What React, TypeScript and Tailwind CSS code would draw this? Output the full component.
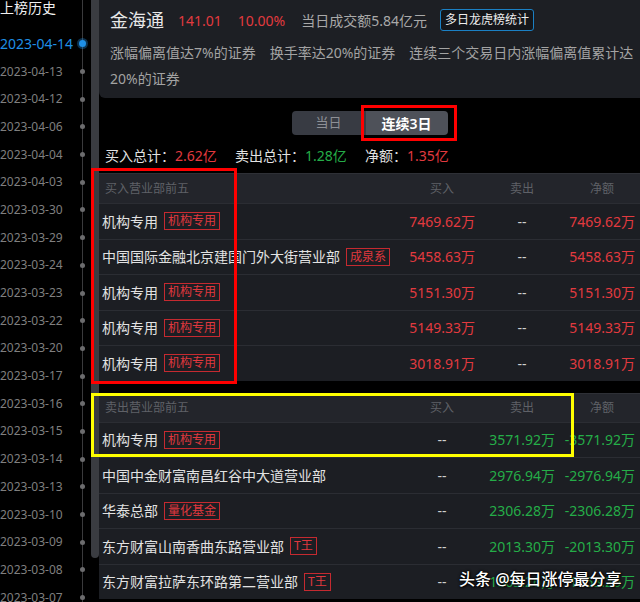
import React from "react";

const dates = [
  "2023-04-14",
  "2023-04-13",
  "2023-04-12",
  "2023-04-06",
  "2023-04-04",
  "2023-04-03",
  "2023-03-30",
  "2023-03-29",
  "2023-03-24",
  "2023-03-23",
  "2023-03-22",
  "2023-03-20",
  "2023-03-17",
  "2023-03-16",
  "2023-03-15",
  "2023-03-14",
  "2023-03-13",
  "2023-03-10",
  "2023-03-09",
  "2023-03-08",
  "2023-03-07",
];

type Row = { name: string; tag?: string; buy: string; sell: string; net: string };

const buyRows: Row[] = [
  { name: "机构专用", tag: "机构专用", buy: "7469.62万", sell: "--", net: "7469.62万" },
  { name: "中国国际金融北京建国门外大街营业部", tag: "成泉系", buy: "5458.63万", sell: "--", net: "5458.63万" },
  { name: "机构专用", tag: "机构专用", buy: "5151.30万", sell: "--", net: "5151.30万" },
  { name: "机构专用", tag: "机构专用", buy: "5149.33万", sell: "--", net: "5149.33万" },
  { name: "机构专用", tag: "机构专用", buy: "3018.91万", sell: "--", net: "3018.91万" },
];

const sellRows: Row[] = [
  { name: "机构专用", tag: "机构专用", buy: "--", sell: "3571.92万", net: "-3571.92万" },
  { name: "中国中金财富南昌红谷中大道营业部", buy: "--", sell: "2976.94万", net: "-2976.94万" },
  { name: "华泰总部", tag: "量化基金", buy: "--", sell: "2306.28万", net: "-2306.28万" },
  { name: "东方财富山南香曲东路营业部", tag: "T王", buy: "--", sell: "2013.30万", net: "-2013.30万" },
  { name: "东方财富拉萨东环路第二营业部", tag: "T王", buy: "--", sell: "1863.26万", net: "-1863.26万" },
];

function Tag({ text }: { text: string }) {
  return (
    <span className="flex h-[18px] items-center border border-[#c52a30] px-[3px] text-[12px] leading-none text-[#e0383e]">
      {text}
    </span>
  );
}

function Value({ v, color }: { v: string; color: string }) {
  if (v === "--") {
    return <div className="w-[80px] pl-[4px] text-center text-[#cfcfcf]">--</div>;
  }
  return <div className={`w-[80px] pr-[5px] text-right ${color}`}>{v}</div>;
}

function Table({ title, rows, headH }: { title: string; rows: Row[]; headH: string }) {
  return (
    <div className="flex flex-col">
      <div className={`flex items-center border-t border-[#2e3036] bg-[#23252b] text-[12px] text-[#5f6167] ${headH}`}>
        <div className="flex-1 pl-[6px]">{title}</div>
        <div className="w-[80px] pl-[4px] text-center">买入</div>
        <div className="w-[80px] pl-[4px] text-center">卖出</div>
        <div className="w-[80px] pl-[4px] text-center">净额</div>
      </div>
      {rows.map((r, i) => (
        <div
          key={i}
          className="flex h-[35.5px] items-center border-t border-[#2b2d33] bg-[#1c1e23] text-[14px]"
        >
          <div className="flex min-w-0 flex-1 items-center gap-[6px] pl-[3px] text-[#e2e2e2]">
            <span className="whitespace-nowrap">{r.name}</span>
            {r.tag && <Tag text={r.tag} />}
          </div>
          <Value v={r.buy} color="text-[#e23a3f]" />
          <Value v={r.sell} color="text-[#25ad48]" />
          <Value v={r.net} color={r.net.startsWith("-") ? "text-[#25ad48]" : "text-[#e23a3f]"} />
        </div>
      ))}
    </div>
  );
}

export default function App() {
  return (
    <div className="relative flex h-[602px] w-[640px] overflow-hidden bg-black font-['Noto_Sans','Noto_Sans_CJK_SC',sans-serif]">
      {/* timeline */}
      <div className="w-[91px] flex-none bg-[linear-gradient(#3a3a3c,#3a3a3c)] bg-[length:1px_100%] bg-[position:82px_0] bg-no-repeat">
        <div className="h-[30px] text-[14px] leading-[16px] text-[#f0f0f0]">上榜历史</div>
        {dates.map((d, i) => (
          <div key={d} className="flex h-[27.7px] items-center">
            <div
              className={
                i === 0
                  ? "w-[80px] text-[14px] text-[#1f8fe6]"
                  : "w-[80px] text-[12px] text-[#7f7f7f]"
              }
            >
              {d}
            </div>
            <div className="flex w-[5px] justify-center">
              {i === 0 ? (
                <span className="h-[7px] w-[7px] flex-none rounded-full bg-[#1f8fe6] shadow-[0_0_0_2px_rgba(31,143,230,0.35)]" />
              ) : (
                <span className="h-[5px] w-[5px] flex-none rounded-full bg-[#6c6c6e]" />
              )}
            </div>
          </div>
        ))}
      </div>

      {/* scrollbar */}
      <div className="h-[558px] w-[8px] flex-none rounded-b-[4px] bg-[#3a3c41]" />

      {/* main */}
      <div className="flex min-w-0 flex-1 flex-col">
        <div className="h-[98px] rounded-bl-[6px] bg-[#1d1f24] pl-[11px] pr-[5px] pt-[9px]">
          <div className="flex h-[22px] items-center">
            <span className="text-[18px] text-[#e8e8e8]">金海通</span>
            <span className="ml-[14px] text-[14px] text-[#e23a3f]">141.01</span>
            <span className="ml-[16px] text-[14px] text-[#e23a3f]">10.00%</span>
            <span className="ml-[16px] text-[14px] text-[#a9a9a9]">当日成交额5.84亿元</span>
            <span className="ml-[13px] flex h-[22px] items-center rounded-[3px] border-[1.5px] border-[#1b80c4] bg-[#14161a] px-[4px] text-[12px] text-[#eeeeee]">
              多日龙虎榜统计
            </span>
          </div>
          <div className="mt-[9px] text-[14px] leading-[26px] text-[#a3a3a3]">
            <span className="mr-[14px]">涨幅偏离值达7%的证券</span>
            <span className="mr-[14px]">换手率达20%的证券</span>
            <span>连续三个交易日内涨幅偏离值累计达20%的证券</span>
          </div>
        </div>

        <div className="mt-[13px] flex justify-center">
          <div className="flex h-[24px] overflow-hidden rounded-[4px]">
            <div className="flex w-[74px] items-center justify-center bg-[#383b43] text-[13px] text-[#8e9096]">
              当日
            </div>
            <div className="flex w-[82px] items-center justify-center bg-[#4e5159] text-[14px] font-semibold text-white">
              连续3日
            </div>
          </div>
        </div>

        <div className="mt-[12px] flex h-[18px] items-center pl-[6px] text-[14px] leading-[18px] text-[#e2e2e2]">
          <div className="w-[130px]">
            买入总计：<span className="text-[#e23a3f]">2.62亿</span>
          </div>
          <div className="w-[130px]">
            卖出总计：<span className="text-[#25ad48]">1.28亿</span>
          </div>
          <div>
            净额：<span className="text-[#e23a3f]">1.35亿</span>
          </div>
        </div>

        <div className="mt-[8px]">
          <Table title="买入营业部前五" rows={buyRows} headH="h-[30px]" />
        </div>
        <div className="mt-[12px]">
          <Table title="卖出营业部前五" rows={sellRows} headH="h-[29px]" />
        </div>
      </div>

      {/* annotations */}
      <div className="absolute left-[91px] top-[168px] h-[216px] w-[146px] border-[3px] border-[#ff0000]" />
      <div className="absolute left-[361px] top-[105px] h-[36px] w-[96px] border-[3px] border-[#ff0000]" />
      <div className="absolute left-[91px] top-[393px] h-[64px] w-[483px] border-[3px] border-[#ffff00]" />

      <div className="absolute left-[459px] top-[567px] text-[16px] font-medium text-white [text-shadow:0_0_2px_#000,0_0_3px_#000,1px_1px_2px_#000]">
        头条 @每日涨停最分享
      </div>
    </div>
  );
}
